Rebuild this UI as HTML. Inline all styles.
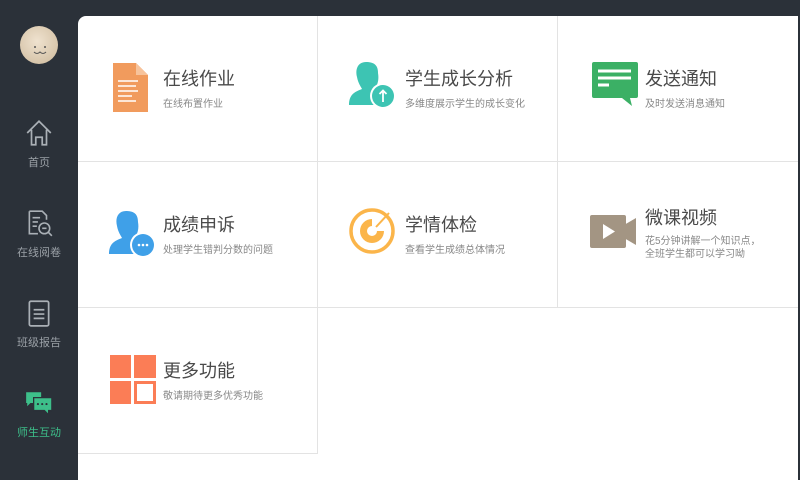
<!DOCTYPE html>
<html><head><meta charset="utf-8"><style>
*{margin:0;padding:0;box-sizing:border-box}
body{width:800px;height:480px;background:#2b3139;font-family:"Liberation Sans","Noto Sans CJK SC",sans-serif;position:relative;overflow:hidden}
.card{position:absolute;left:78px;top:16px;width:720px;height:464px;background:#fff;border-top-left-radius:8px}
.cell{position:absolute;width:240px;height:146px;border-right:1.5px solid #e3e3e3;border-bottom:1.5px solid #e3e3e3}
.ic{position:absolute;left:30px;top:46px}
.t{position:absolute;left:85px;top:49px;font-size:18px;color:#4a4a4a;white-space:nowrap}
.s{position:absolute;left:85px;top:82px;font-size:10px;color:#888;white-space:nowrap;line-height:13px}
.nav{position:absolute;left:0;width:78px;text-align:center;color:#9aa0a6;font-size:11px}
.nav svg{display:block;margin:0 auto 6px}
</style></head><body>
<div style="position:absolute;left:20px;top:26px;width:38px;height:38px;border-radius:50%;background:radial-gradient(circle at 45% 40%,#efe2cf,#cdb99b)"></div>
<svg style="position:absolute;left:20px;top:26px" width="38" height="38"><circle cx="15" cy="21" r="1" fill="#555"/><circle cx="25" cy="21" r="1" fill="#555"/><path d="M14 26 q3 3 6 0 q3 3 6 0" stroke="#555" fill="none" stroke-width="1"/></svg>
<div class="nav" style="top:118px"><svg width="30" height="30" viewBox="0 0 28 28" fill="none" stroke="#aab0b6" stroke-width="1.6"><path d="M3 14 L14 3 L25 14 M7 11 V25 H11 V18 H17 V25 H21 V11"/></svg>首页</div>
<div class="nav" style="top:208px"><svg width="30" height="30" viewBox="0 0 28 28" fill="none" stroke="#aab0b6" stroke-width="1.5"><path d="M5 3 H17 L21 7 V11 M5 3 V24 H13"/><path d="M8 9 H15 M8 13 H13 M8 17 H12"/><circle cx="19" cy="19" r="5"/><path d="M22.5 22.5 L26 26 M17 19 H21"/></svg>在线阅卷</div>
<div class="nav" style="top:298px"><svg width="30" height="30" viewBox="0 0 28 28" fill="none" stroke="#aab0b6" stroke-width="1.6"><rect x="5" y="3" width="18" height="23" rx="1.5"/><path d="M9 11 H19 M9 15 H19 M9 19 H19"/></svg>班级报告</div>
<div class="nav" style="top:388px;color:#3dbf8a"><svg width="30" height="30" viewBox="0 0 28 28"><path d="M2 4 H16 V14 H6 L3 17 V14 H2Z" fill="#3dbf8a"/><path d="M9 9 H26 V21 H23 V25 L19 21 H9Z" fill="#3dbf8a" stroke="#2b3139" stroke-width="1.2"/><circle cx="13" cy="15" r="1" fill="#2b3139"/><circle cx="17" cy="15" r="1" fill="#2b3139"/><circle cx="21" cy="15" r="1" fill="#2b3139"/></svg>师生互动</div>
<div class="card">
<div class="cell" style="left:0;top:0">
<svg class="ic" style="left:34px;top:47px" width="36" height="50" viewBox="0 0 36 50"><path d="M1 0 H24 L36 12 V49 H1Z" fill="#f19b5d"/><path d="M24 0 L36 12 H24Z" fill="#f7c39b"/><path d="M6 18 H26 M6 23 H24 M6 28 H26 M6 33 H20 M6 38 H24" stroke="#fff" stroke-width="1.6"/></svg>
<div class="t">在线作业</div><div class="s">在线布置作业</div></div>
<div class="cell" style="left:240px;top:0">
<svg class="ic" style="left:30px;top:43px" width="50" height="52" viewBox="0 0 50 52"><path d="M18 3 C10 3 7 10 9 18 C10 24 13 28 14 30 C6 33 1 36 1 46 H28 V28 C30 24 31 20 30 14 C30 6 26 3 18 3Z" fill="#3dc4b3"/><circle cx="35" cy="37" r="13" fill="#fff"/><circle cx="35" cy="37" r="11" fill="#3dc4b3"/><path d="M35 43 V32 M31.5 35 L35 31.5 L38.5 35" stroke="#fff" stroke-width="1.8" fill="none"/></svg>
<div class="t" style="left:87px">学生成长分析</div><div class="s" style="left:87px">多维度展示学生的成长变化</div></div>
<div class="cell" style="left:480px;top:0;border-right:none;width:240px">
<svg class="ic" style="left:34px;top:46px" width="46" height="46" viewBox="0 0 46 46"><path d="M2 0 H44 Q46 0 46 2 V34 Q46 36 44 36 H38 L40 44 L30 36 H2 Q0 36 0 34 V2 Q0 0 2 0Z" fill="#3bb065"/><path d="M6 9 H39 M6 16 H39 M6 23 H17" stroke="#fff" stroke-width="3"/></svg>
<div class="t" style="left:87px">发送通知</div><div class="s" style="left:87px">及时发送消息通知</div></div>
<div class="cell" style="left:0;top:146px">
<svg class="ic" style="left:30px;top:46px" width="50" height="52" viewBox="0 0 50 52"><path d="M18 3 C10 3 7 10 9 18 C10 24 13 28 14 30 C6 33 1 36 1 46 H28 V28 C30 24 31 20 30 14 C30 6 26 3 18 3Z" fill="#3fa0e8"/><circle cx="35" cy="37" r="13" fill="#fff"/><circle cx="35" cy="37" r="11" fill="#3fa0e8"/><circle cx="31" cy="37" r="1.3" fill="#fff"/><circle cx="35" cy="37" r="1.3" fill="#fff"/><circle cx="39" cy="37" r="1.3" fill="#fff"/></svg>
<div class="t">成绩申诉</div><div class="s">处理学生错判分数的问题</div></div>
<div class="cell" style="left:240px;top:146px">
<svg class="ic" style="left:31px;top:43px" width="48" height="50" viewBox="0 0 48 50"><circle cx="23" cy="26" r="21" fill="none" stroke="#fbb54a" stroke-width="3.5"/><path d="M23 14 A12 12 0 1 0 35 26 L28 26 A5 5 0 1 1 23 21Z" fill="#fbb54a"/><path d="M27 22 L40 8" stroke="#fbb54a" stroke-width="2"/></svg>
<div class="t" style="left:87px">学情体检</div><div class="s" style="left:87px">查看学生成绩总体情况</div></div>
<div class="cell" style="left:480px;top:146px;border-right:none">
<svg class="ic" style="left:32px;top:53px" width="46" height="34" viewBox="0 0 46 34"><rect x="0" y="0" width="36" height="33" rx="2" fill="#a39583"/><path d="M34 10 L46 3 V30 L34 23Z" fill="#a39583"/><path d="M13 9 V24 L25 16.5Z" fill="#fff"/></svg>
<div class="t" style="top:42px;left:87px">微课视频</div><div class="s" style="top:73px;left:87px">花5分钟讲解一个知识点，<br>全班学生都可以学习呦</div></div>
<div class="cell" style="left:0;top:292px">
<svg class="ic" style="left:32px;top:47px" width="46" height="50" viewBox="0 0 46 50"><rect x="0" y="0" width="21" height="23" fill="#fb7d56"/><rect x="24" y="0" width="22" height="23" fill="#fb7d56"/><rect x="0" y="26" width="21" height="23" fill="#fb7d56"/><rect x="25.5" y="27.5" width="19" height="20" fill="#fff" stroke="#fb7d56" stroke-width="3"/></svg>
<div class="t">更多功能</div><div class="s">敬请期待更多优秀功能</div></div>
</div>
</body></html>
